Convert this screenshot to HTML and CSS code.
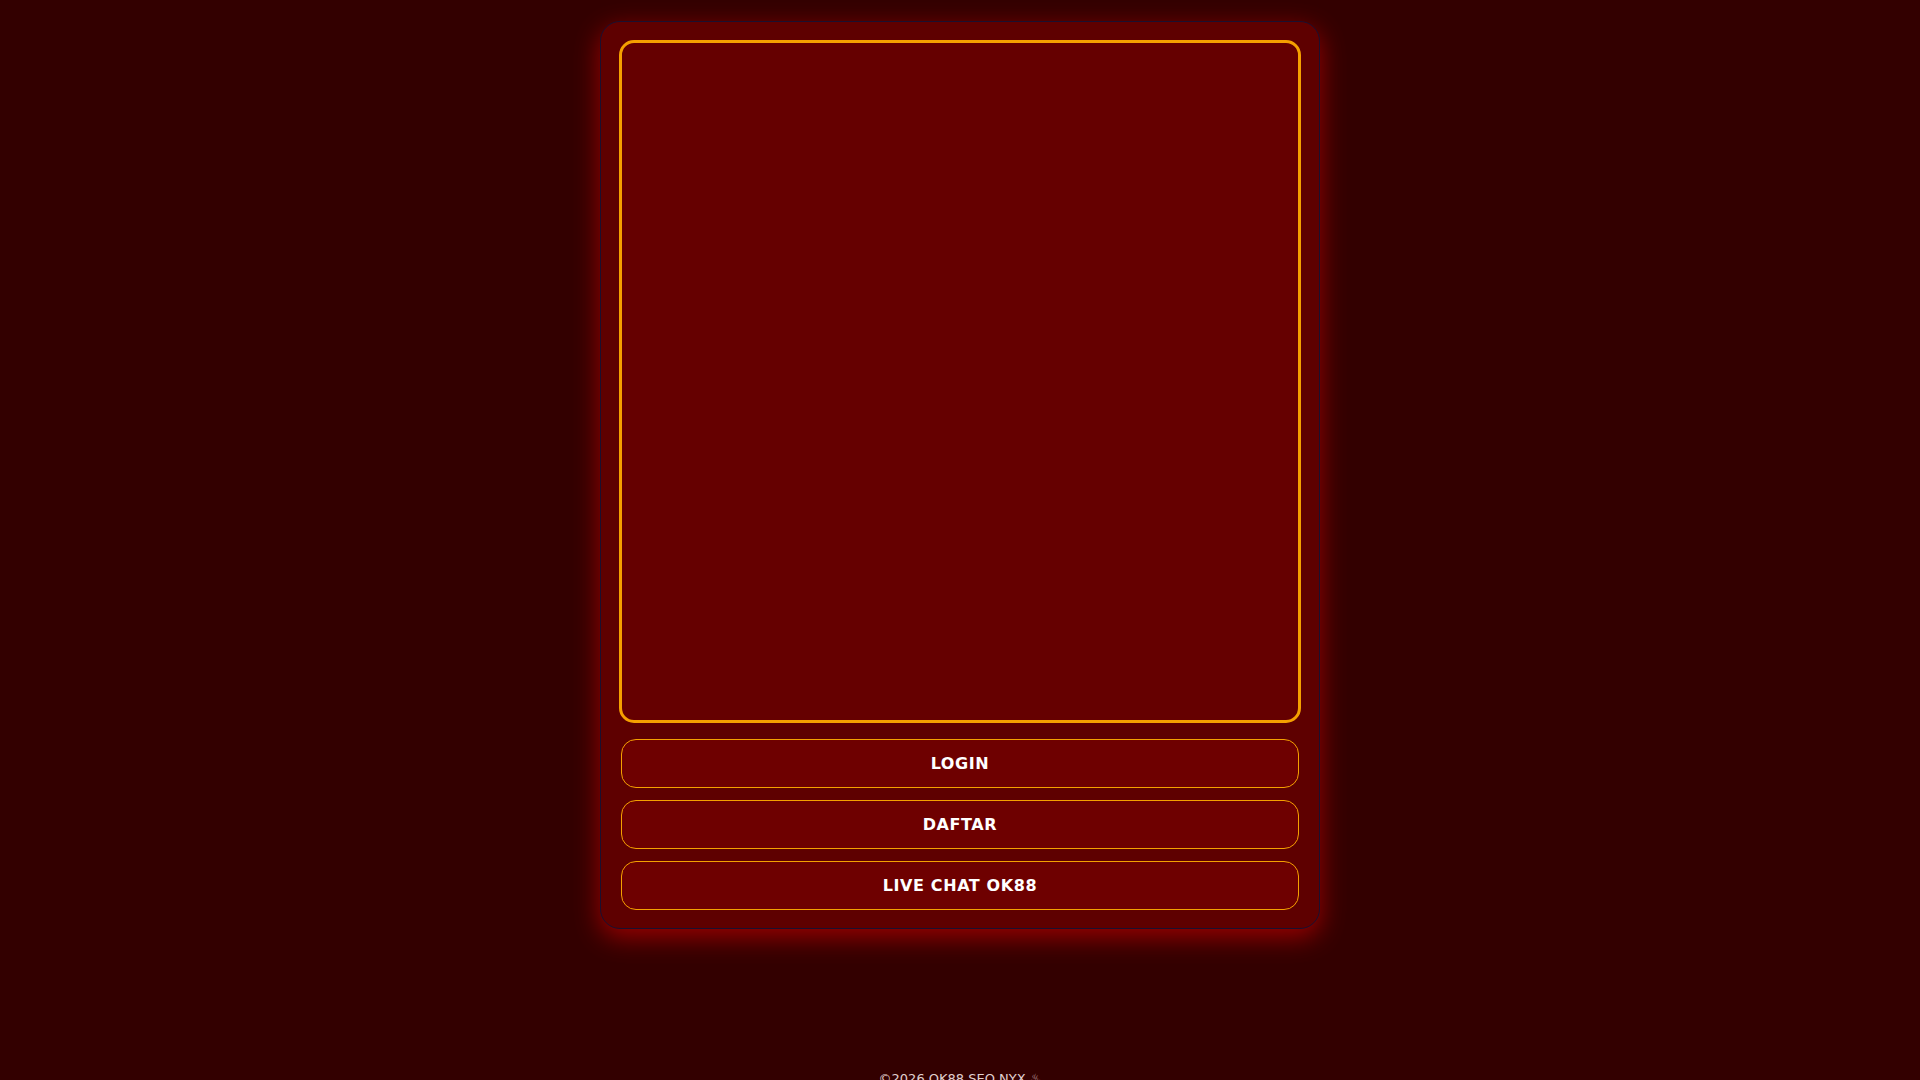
FILE: index.html
```html
<!DOCTYPE html>
<html lang="id">
<head>
<meta charset="utf-8">
<title>OK88</title>
<link rel="stylesheet" href="styles.css">
</head>
<body>
<main class="card">
  <div class="frame"></div>
  <nav class="buttons">
    <a class="btn" href="#">LOGIN</a>
    <a class="btn" href="#">DAFTAR</a>
    <a class="btn" href="#">LIVE CHAT OK88</a>
  </nav>
</main>
<footer class="footer">©2026 OK88 SEO NYX ♨</footer>
</body>
</html>
```
FILE: styles.css
```css
html, body {
  margin: 0;
  padding: 0;
}
body {
  background: #330000;
  font-family: "DejaVu Sans", Verdana, sans-serif;
  color: #fff;
  min-height: 1080px;
}
.card {
  box-sizing: border-box;
  width: 720px;
  margin: 21px auto 0;
  padding: 18px;
  background: #5e0000;
  border: 1px solid #1a1030;
  border-radius: 20px;
  box-shadow: 0 8px 26px #9a0000;
}
.frame {
  box-sizing: border-box;
  height: 683px;
  background: #650000;
  border: 3px solid #f5a000;
  border-radius: 15px;
}
.buttons {
  display: flex;
  flex-direction: column;
  gap: 12px;
  margin: 16px 2px 0;
}
.btn {
  box-sizing: border-box;
  display: flex;
  align-items: center;
  justify-content: center;
  height: 49px;
  background: #6e0000;
  border: 1px solid #f5a000;
  border-radius: 15px;
  color: #fff;
  text-decoration: none;
  font-weight: bold;
  font-size: 16px;
  letter-spacing: 0.6px;
}
.footer {
  margin-top: 141px;
  text-align: center;
  font-size: 13px;
  line-height: 18px;
  color: #e0d0d0;
}
```
